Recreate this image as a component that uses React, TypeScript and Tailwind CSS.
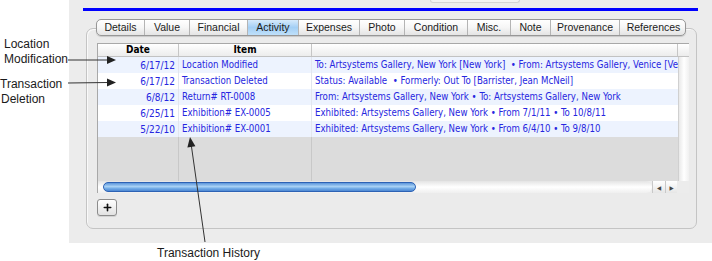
import { Plus } from 'lucide-react'

const tabs = [
  { label: 'Details', w: 48 },
  { label: 'Value', w: 45 },
  { label: 'Financial', w: 58 },
  { label: 'Activity', w: 51 },
  { label: 'Expenses', w: 61 },
  { label: 'Photo', w: 45 },
  { label: 'Condition', w: 63 },
  { label: 'Misc.', w: 43 },
  { label: 'Note', w: 40 },
  { label: 'Provenance', w: 69 },
  { label: 'References', w: 67 },
]

const rows = [
  {
    date: '6/17/12',
    item: 'Location Modified',
    desc: 'To: Artsystems Gallery, New York [New York]  \u2022 From: Artsystems Gallery, Venice [Ve',
  },
  {
    date: '6/17/12',
    item: 'Transaction Deleted',
    desc: 'Status: Available  \u2022 Formerly: Out To [Barrister, Jean McNeil]',
  },
  {
    date: '6/8/12',
    item: 'Return# RT-0008',
    desc: 'From: Artsystems Gallery, New York \u2022 To: Artsystems Gallery, New York',
  },
  {
    date: '6/25/11',
    item: 'Exhibition# EX-0005',
    desc: 'Exhibited: Artsystems Gallery, New York \u2022 From 7/1/11 \u2022 To 10/8/11',
  },
  {
    date: '5/22/10',
    item: 'Exhibition# EX-0001',
    desc: 'Exhibited: Artsystems Gallery, New York \u2022 From 6/4/10 \u2022 To 9/8/10',
  },
]

function Tabs() {
  return (
    <div className="relative z-10 ml-[27px] flex h-[17px] w-[590px] overflow-hidden rounded-[5px] border border-[#979797] bg-gradient-to-b from-white via-[#f6f6f6] to-[#e4e4e4] shadow-[0_1px_1px_rgba(0,0,0,0.15)]">
      {tabs.map((tab, i) => (
        <div
          key={tab.label}
          style={{ width: tab.w }}
          className={
            'flex shrink-0 items-center justify-center text-[10.5px] leading-none text-[#1b1b1b] ' +
            (i < tabs.length - 1 ? 'border-r border-[#b4b4b4] ' : '') +
            (tab.label === 'Activity'
              ? 'bg-gradient-to-b from-[#d6eafc] via-[#a3cff5] to-[#bfe0fa]'
              : '')
          }
        >
          {tab.label}
        </div>
      ))}
    </div>
  )
}

function ActivityTable() {
  return (
    <div className="flex w-[592px] flex-col border-l border-t border-[#a8a8a8] font-['DejaVu_Sans_Condensed','Liberation_Sans',sans-serif]">
      {/* Header */}
      <div className="flex h-[13px] border-b border-[#c2c2c2] bg-gradient-to-b from-white to-[#ececec] text-[10px] font-bold leading-[12px] text-black">
        <div className="w-[81px] border-r border-[#c6c6c6] text-center">Date</div>
        <div className="w-[133px] border-r border-[#c6c6c6] text-center">Item</div>
        <div className="flex-1 border-r border-[#c6c6c6]" />
        <div className="w-[11px]" />
      </div>
      {/* Body */}
      <div className="flex">
        <div className="flex w-[580px] flex-col">
          {rows.map((row, i) => (
            <div
              key={i}
              className={
                'flex h-[16px] items-center text-[9.6px] text-[#2626e0] ' +
                (i % 2 === 0 ? 'bg-[#edf3fe]' : 'bg-white')
              }
            >
              <div className="flex h-full w-[81px] items-center justify-end border-r border-[#e2e6ee] pr-[3px] text-[10px]">
                {row.date}
              </div>
              <div className="flex h-full w-[133px] items-center border-r border-[#e2e6ee] pl-[3px] whitespace-nowrap">
                {row.item}
              </div>
              <div className="flex h-full flex-1 items-center pl-[3px] whitespace-pre">
                {row.desc}
              </div>
            </div>
          ))}
          <div className="flex h-[44px] bg-[#dcdcdc]">
            <div className="w-[81px] border-r border-[#c8c8c8]" />
            <div className="w-[133px] border-r border-[#c8c8c8]" />
            <div className="flex-1" />
          </div>
        </div>
        <div className="w-[12px] border-l border-[#d0d0d0] bg-gradient-to-r from-[#e9e9e9] via-white to-[#f0f0f0]" />
      </div>
      {/* Horizontal scrollbar */}
      <div className="flex h-[12px] bg-[#ececec]">
        <div className="flex flex-1 items-center rounded-r-full bg-gradient-to-b from-[#e4e4e4] via-white to-[#efefef] pl-[5px]">
          <div className="h-[10px] w-[313px] rounded-full border border-[#2d62b4] bg-[linear-gradient(to_bottom,#5b95da,#a9d2f5_45%,#6fa9e6_70%,#4d87d2)]" />
        </div>
        <div className="flex w-[13px] items-center justify-center border-l border-[#c8c8c8] bg-gradient-to-b from-white to-[#e6e6e6] text-[6px] text-[#444]">
          {'\u25C0'}
        </div>
        <div className="flex w-[12px] items-center justify-center border-l border-[#c8c8c8] bg-gradient-to-b from-white to-[#e6e6e6] text-[6px] text-[#444]">
          {'\u25B6'}
        </div>
        <div className="w-[12px] bg-[#ececec]" />
      </div>
    </div>
  )
}

export default function App() {
  return (
    <div className="relative h-[261px] w-[712px] overflow-hidden bg-white font-['Liberation_Sans',Arial,sans-serif]">
      <div className="flex h-[243px]">
        {/* Left annotations */}
        <div className="w-[69px] shrink-0 text-[12px] leading-[15px] text-[#1a1a1a]">
          <div className="pl-[4px] pt-[37px]">
            <div>Location</div>
            <div>Modification</div>
          </div>
          <div className="mt-[10px]">
            <div>Transaction</div>
            <div className="pl-[1px]">Deletion</div>
          </div>
        </div>

        {/* Gray panel */}
        <div className="flex-1 bg-[#ececec]">
          <div className="ml-[361px] h-[3px] w-[90px] rounded-b-[3px] border border-t-0 border-[#d4d4d4] bg-[#f3f3f3]" />
          <div className="ml-[14px] mt-[5px] h-[3px] w-[615px] bg-[#0000ff]" />

          <div className="mt-[8px]">
            <Tabs />
            <div className="-mt-[8px] ml-[17px] h-[201px] w-[611px] rounded-[7px] border border-[#c4c4c4] bg-[#ebebeb] pl-[10px] pt-[14px] shadow-[inset_1px_1px_0_rgba(255,255,255,0.7)]">
              <ActivityTable />
              <button className="mt-[6px] flex h-[17px] w-[20px] items-center justify-center rounded-[3px] border border-[#8c8c8c] bg-gradient-to-b from-white to-[#e2e2e2] shadow-[0_1px_0_rgba(0,0,0,0.1)]">
                <Plus size={11} strokeWidth={3.5} color="#111" />
              </button>
            </div>
          </div>
        </div>
      </div>

      <div className="mt-[3px] pl-[157px] text-[12px] leading-[15px] text-[#1a1a1a]">
        Transaction History
      </div>

      {/* Callout arrows */}
      <svg
        className="pointer-events-none absolute inset-0"
        width="712"
        height="261"
        viewBox="0 0 712 261"
      >
        <g stroke="#333" strokeWidth="1" fill="#222">
          <line x1="68" y1="60" x2="108" y2="60" />
          <polygon points="107,56 116,60 107,64" stroke="none" />
          <line x1="68" y1="83" x2="108" y2="82.5" />
          <polygon points="107,78.5 116,82.5 107,86.5" stroke="none" />
          <line x1="205" y1="242" x2="191.4" y2="146" />
          <polygon points="190,137 195.4,146.3 187.4,147.5" stroke="none" />
        </g>
      </svg>
    </div>
  )
}
